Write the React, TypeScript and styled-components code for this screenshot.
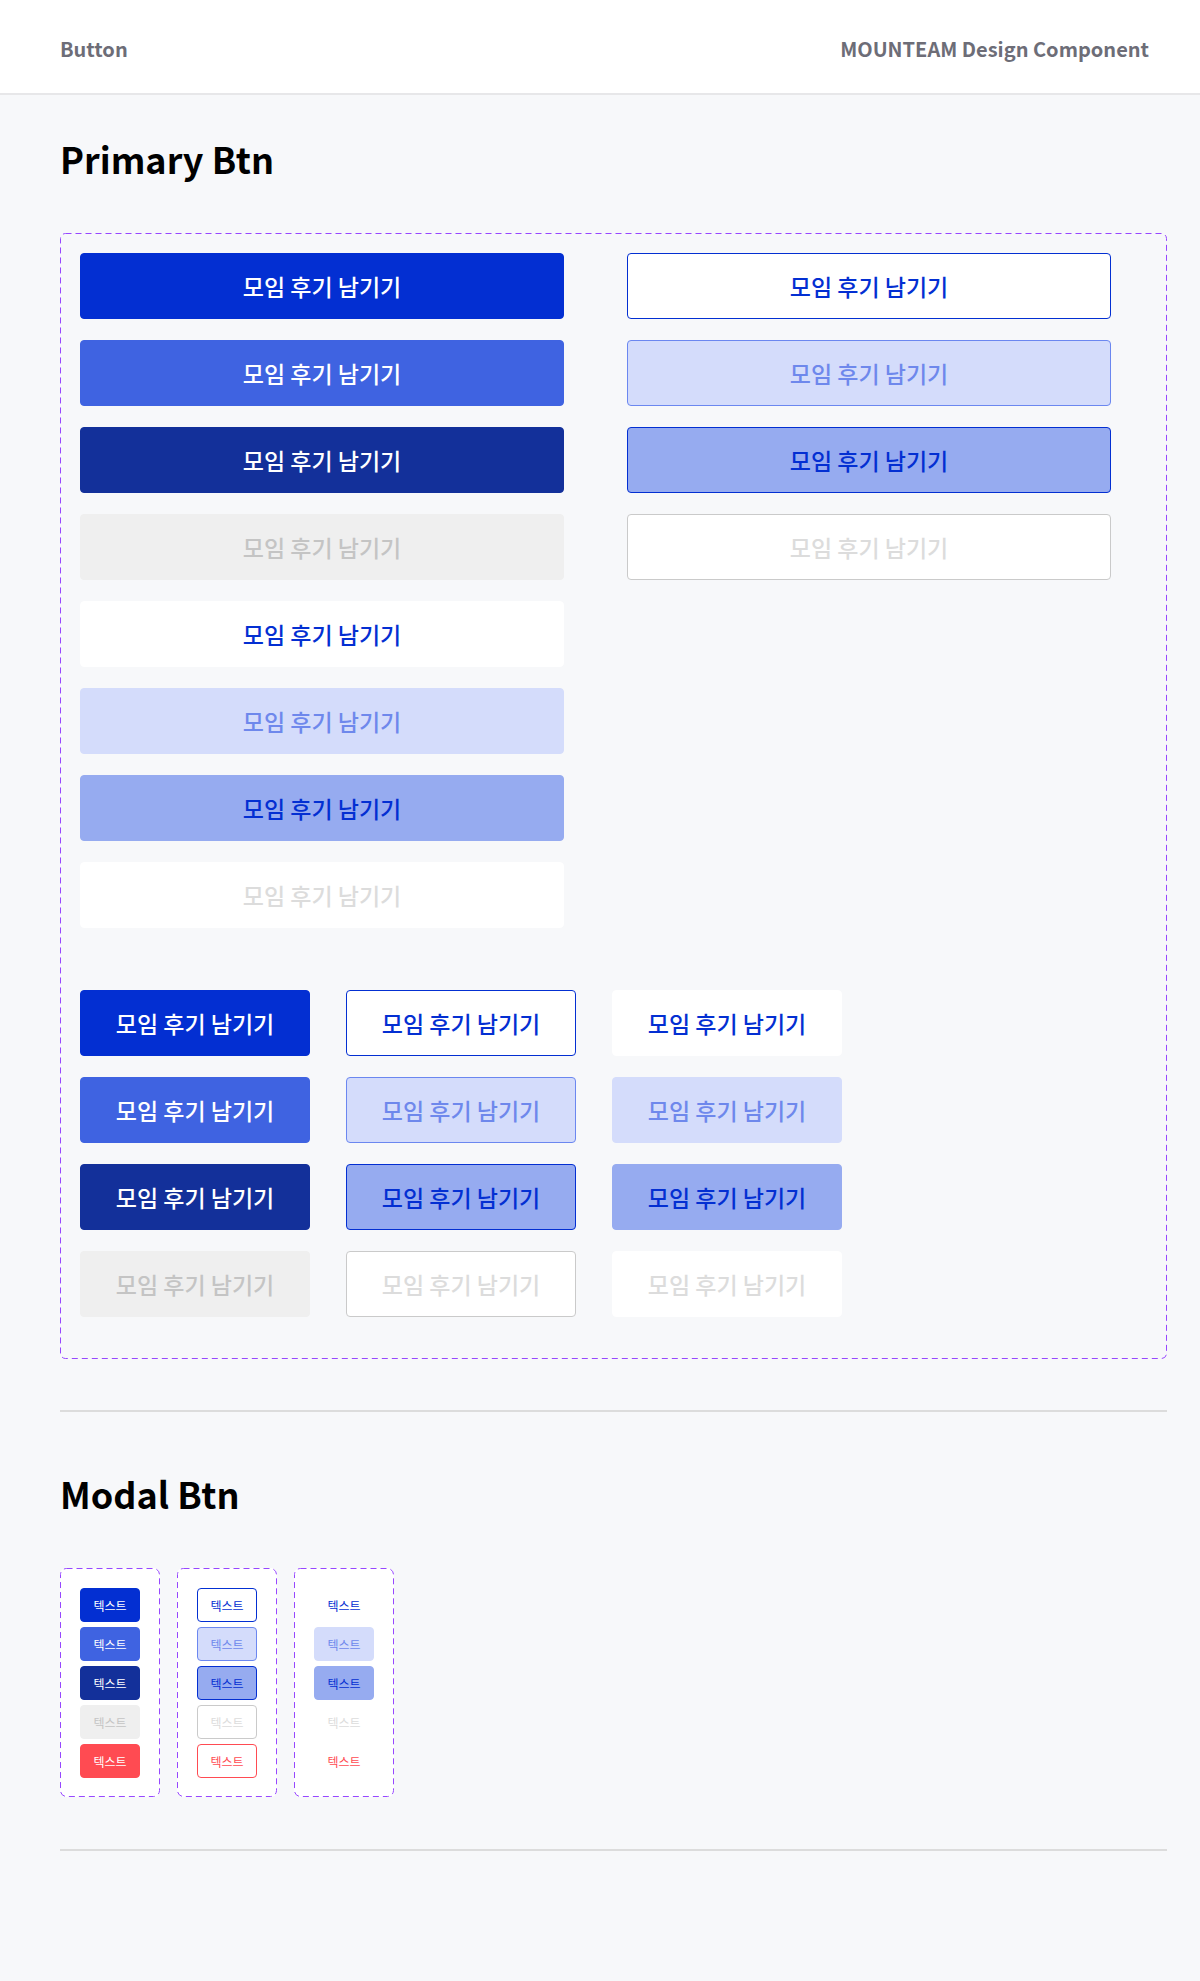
import React from 'react'
import styled, {createGlobalStyle, css} from 'styled-components'

const GlobalStyle = createGlobalStyle`
    * {
        box-sizing: border-box;
    }
    html, body {
        margin: 0;
        padding: 0;
        background: #f7f8fa;
        font-family: "Noto Sans CJK KR", "Noto Sans", sans-serif;
    }
`

const colors = {
    primary: '#032fd2',
    hover: '#3f63e1',
    pressed: '#13309a',
    light: '#d4dcfb',
    lightText: '#6e88ec',
    lightBorder: '#6b87f0',
    mid: '#96abf0',
    grayBg: '#efefef',
    grayText: '#c4c4c4',
    paleText: '#dcdcdc',
    grayBorder: '#cacaca',
    danger: '#ff4b52',
    purple: '#9747ff',
}

type Variant =
    | 'solid' | 'solidHover' | 'solidPressed' | 'solidDisabled'
    | 'ghost' | 'ghostHover' | 'ghostPressed' | 'ghostDisabled'
    | 'outline' | 'outlineHover' | 'outlinePressed' | 'outlineDisabled'
    | 'danger' | 'dangerOutline' | 'dangerGhost'

const variants: Record<Variant, {bg: string, color: string, border?: string}> = {
    solid: {bg: colors.primary, color: '#fff'},
    solidHover: {bg: colors.hover, color: '#fff'},
    solidPressed: {bg: colors.pressed, color: '#fff'},
    solidDisabled: {bg: colors.grayBg, color: colors.grayText},
    ghost: {bg: '#fff', color: colors.primary},
    ghostHover: {bg: colors.light, color: colors.lightText},
    ghostPressed: {bg: colors.mid, color: colors.primary},
    ghostDisabled: {bg: '#fff', color: colors.paleText},
    outline: {bg: '#fff', color: colors.primary, border: colors.primary},
    outlineHover: {bg: colors.light, color: colors.lightText, border: colors.lightBorder},
    outlinePressed: {bg: colors.mid, color: colors.primary, border: colors.primary},
    outlineDisabled: {bg: '#fff', color: colors.paleText, border: colors.grayBorder},
    danger: {bg: colors.danger, color: '#fff'},
    dangerOutline: {bg: '#fff', color: colors.danger, border: colors.danger},
    dangerGhost: {bg: '#fff', color: colors.danger},
}

const variantStyle = ({$variant}: {$variant: Variant}) => {
    const v = variants[$variant]
    return css`
        background: ${v.bg};
        color: ${v.color};
        border: 1px solid ${v.border ?? v.bg};
    `
}

const BigColumns = ['solid', 'solidHover', 'solidPressed', 'solidDisabled', 'ghost', 'ghostHover', 'ghostPressed', 'ghostDisabled'] as Variant[]
const OutlineColumn = ['outline', 'outlineHover', 'outlinePressed', 'outlineDisabled'] as Variant[]
const SmallRows: Variant[][] = [
    ['solid', 'outline', 'ghost'],
    ['solidHover', 'outlineHover', 'ghostHover'],
    ['solidPressed', 'outlinePressed', 'ghostPressed'],
    ['solidDisabled', 'outlineDisabled', 'ghostDisabled'],
]
const ModalColumns: Variant[][] = [
    ['solid', 'solidHover', 'solidPressed', 'solidDisabled', 'danger'],
    ['outline', 'outlineHover', 'outlinePressed', 'outlineDisabled', 'dangerOutline'],
    ['ghost', 'ghostHover', 'ghostPressed', 'ghostDisabled', 'dangerGhost'],
]

const LABEL = '모임 후기 남기기'

const DashFrame = ({radius}: {radius: number}) => (
    <FrameSvg>
        <rect x="0.5" y="0.5" width="calc(100% - 1px)" height="calc(100% - 1px)" rx={radius} ry={radius}
              fill="none" stroke={colors.purple} strokeWidth="1" strokeDasharray="6 4"/>
    </FrameSvg>
)

export default function App() {
    return (
        <Page>
            <GlobalStyle/>
            <Header>
                <HeaderText>Button</HeaderText>
                <HeaderText>MOUNTEAM Design Component</HeaderText>
            </Header>
            <Main>
                <Section $top={40}>
                    <Title>Primary Btn</Title>
                    <ComponentSet>
                        <DashFrame radius={5}/>
                        <WideGrid>
                            <WideColumn>
                                {BigColumns.map((v, i) => (
                                    <WideButton key={i} $variant={v}>{LABEL}</WideButton>
                                ))}
                            </WideColumn>
                            <WideColumn>
                                {OutlineColumn.map((v, i) => (
                                    <WideButton key={i} $variant={v}>{LABEL}</WideButton>
                                ))}
                            </WideColumn>
                        </WideGrid>
                        <SmallGrid>
                            {SmallRows.flat().map((v, i) => (
                                <SmallButton key={i} $variant={v}>{LABEL}</SmallButton>
                            ))}
                        </SmallGrid>
                    </ComponentSet>
                </Section>
                <Divider $top={51}/>
                <Section $top={58}>
                    <Title>Modal Btn</Title>
                    <ModalRow>
                        {ModalColumns.map((col, ci) => (
                            <ModalSet key={ci}>
                                <DashFrame radius={6}/>
                                {col.map((v, i) => (
                                    <ModalButton key={i} $variant={v}>텍스트</ModalButton>
                                ))}
                            </ModalSet>
                        ))}
                    </ModalRow>
                </Section>
                <Divider $top={52}/>
            </Main>
        </Page>
    )
}

const Page = styled.div`
    min-height: 1981px;
    background: #f7f8fa;
`

const Header = styled.header`
    height: 95px;
    padding: 3px 51px 0 60px;
    background: #fff;
    border-bottom: 2px solid #e7e7e9;
    display: flex;
    justify-content: space-between;
    align-items: center;
`

const HeaderText = styled.span`
    font-size: 20px;
    font-weight: 700;
    color: #6d6d77;
`

const Main = styled.main`
    padding: 0 33px 130px 60px;
`

const Section = styled.section<{$top: number}>`
    padding-top: ${({$top}) => $top}px;
`

const Title = styled.h2`
    margin: 0 0 52px;
    font-size: 36px;
    line-height: 46px;
    font-weight: 700;
    color: #000;
`

const ComponentSet = styled.div`
    position: relative;
    padding: 20px 20px 42px;
`

const FrameSvg = styled.svg`
    position: absolute;
    inset: 0;
    width: 100%;
    height: 100%;
    overflow: visible;
    pointer-events: none;
`

const WideGrid = styled.div`
    display: grid;
    grid-template-columns: 484px 484px;
    column-gap: 63px;
`

const WideColumn = styled.div`
    display: flex;
    flex-direction: column;
    gap: 21px;
`

const ButtonBase = styled.button<{$variant: Variant}>`
    display: flex;
    align-items: center;
    justify-content: center;
    padding: 0;
    border-radius: 4px;
    font-family: "Noto Sans CJK KR", sans-serif;
    font-weight: 500;
    cursor: pointer;
    ${variantStyle}
`

const WideButton = styled(ButtonBase)`
    width: 484px;
    height: 66px;
    font-size: 23px;
`

const SmallGrid = styled.div`
    margin-top: 62px;
    display: grid;
    grid-template-columns: repeat(3, 230px);
    column-gap: 36px;
    row-gap: 21px;
`

const SmallButton = styled(ButtonBase)`
    width: 230px;
    height: 66px;
    font-size: 23px;
`

const Divider = styled.hr<{$top: number}>`
    margin: ${({$top}) => $top}px 0 0;
    border: none;
    height: 2px;
    background: #dcdcdc;
`

const ModalRow = styled.div`
    display: flex;
    gap: 17px;
`

const ModalSet = styled.div`
    position: relative;
    width: 100px;
    padding: 20px 0 19px;
    background: #fff;
    border-radius: 6px;
    display: flex;
    flex-direction: column;
    align-items: center;
    gap: 5px;
`

const ModalButton = styled(ButtonBase)`
    width: 60px;
    height: 34px;
    font-size: 12px;
    font-weight: 400;
`
